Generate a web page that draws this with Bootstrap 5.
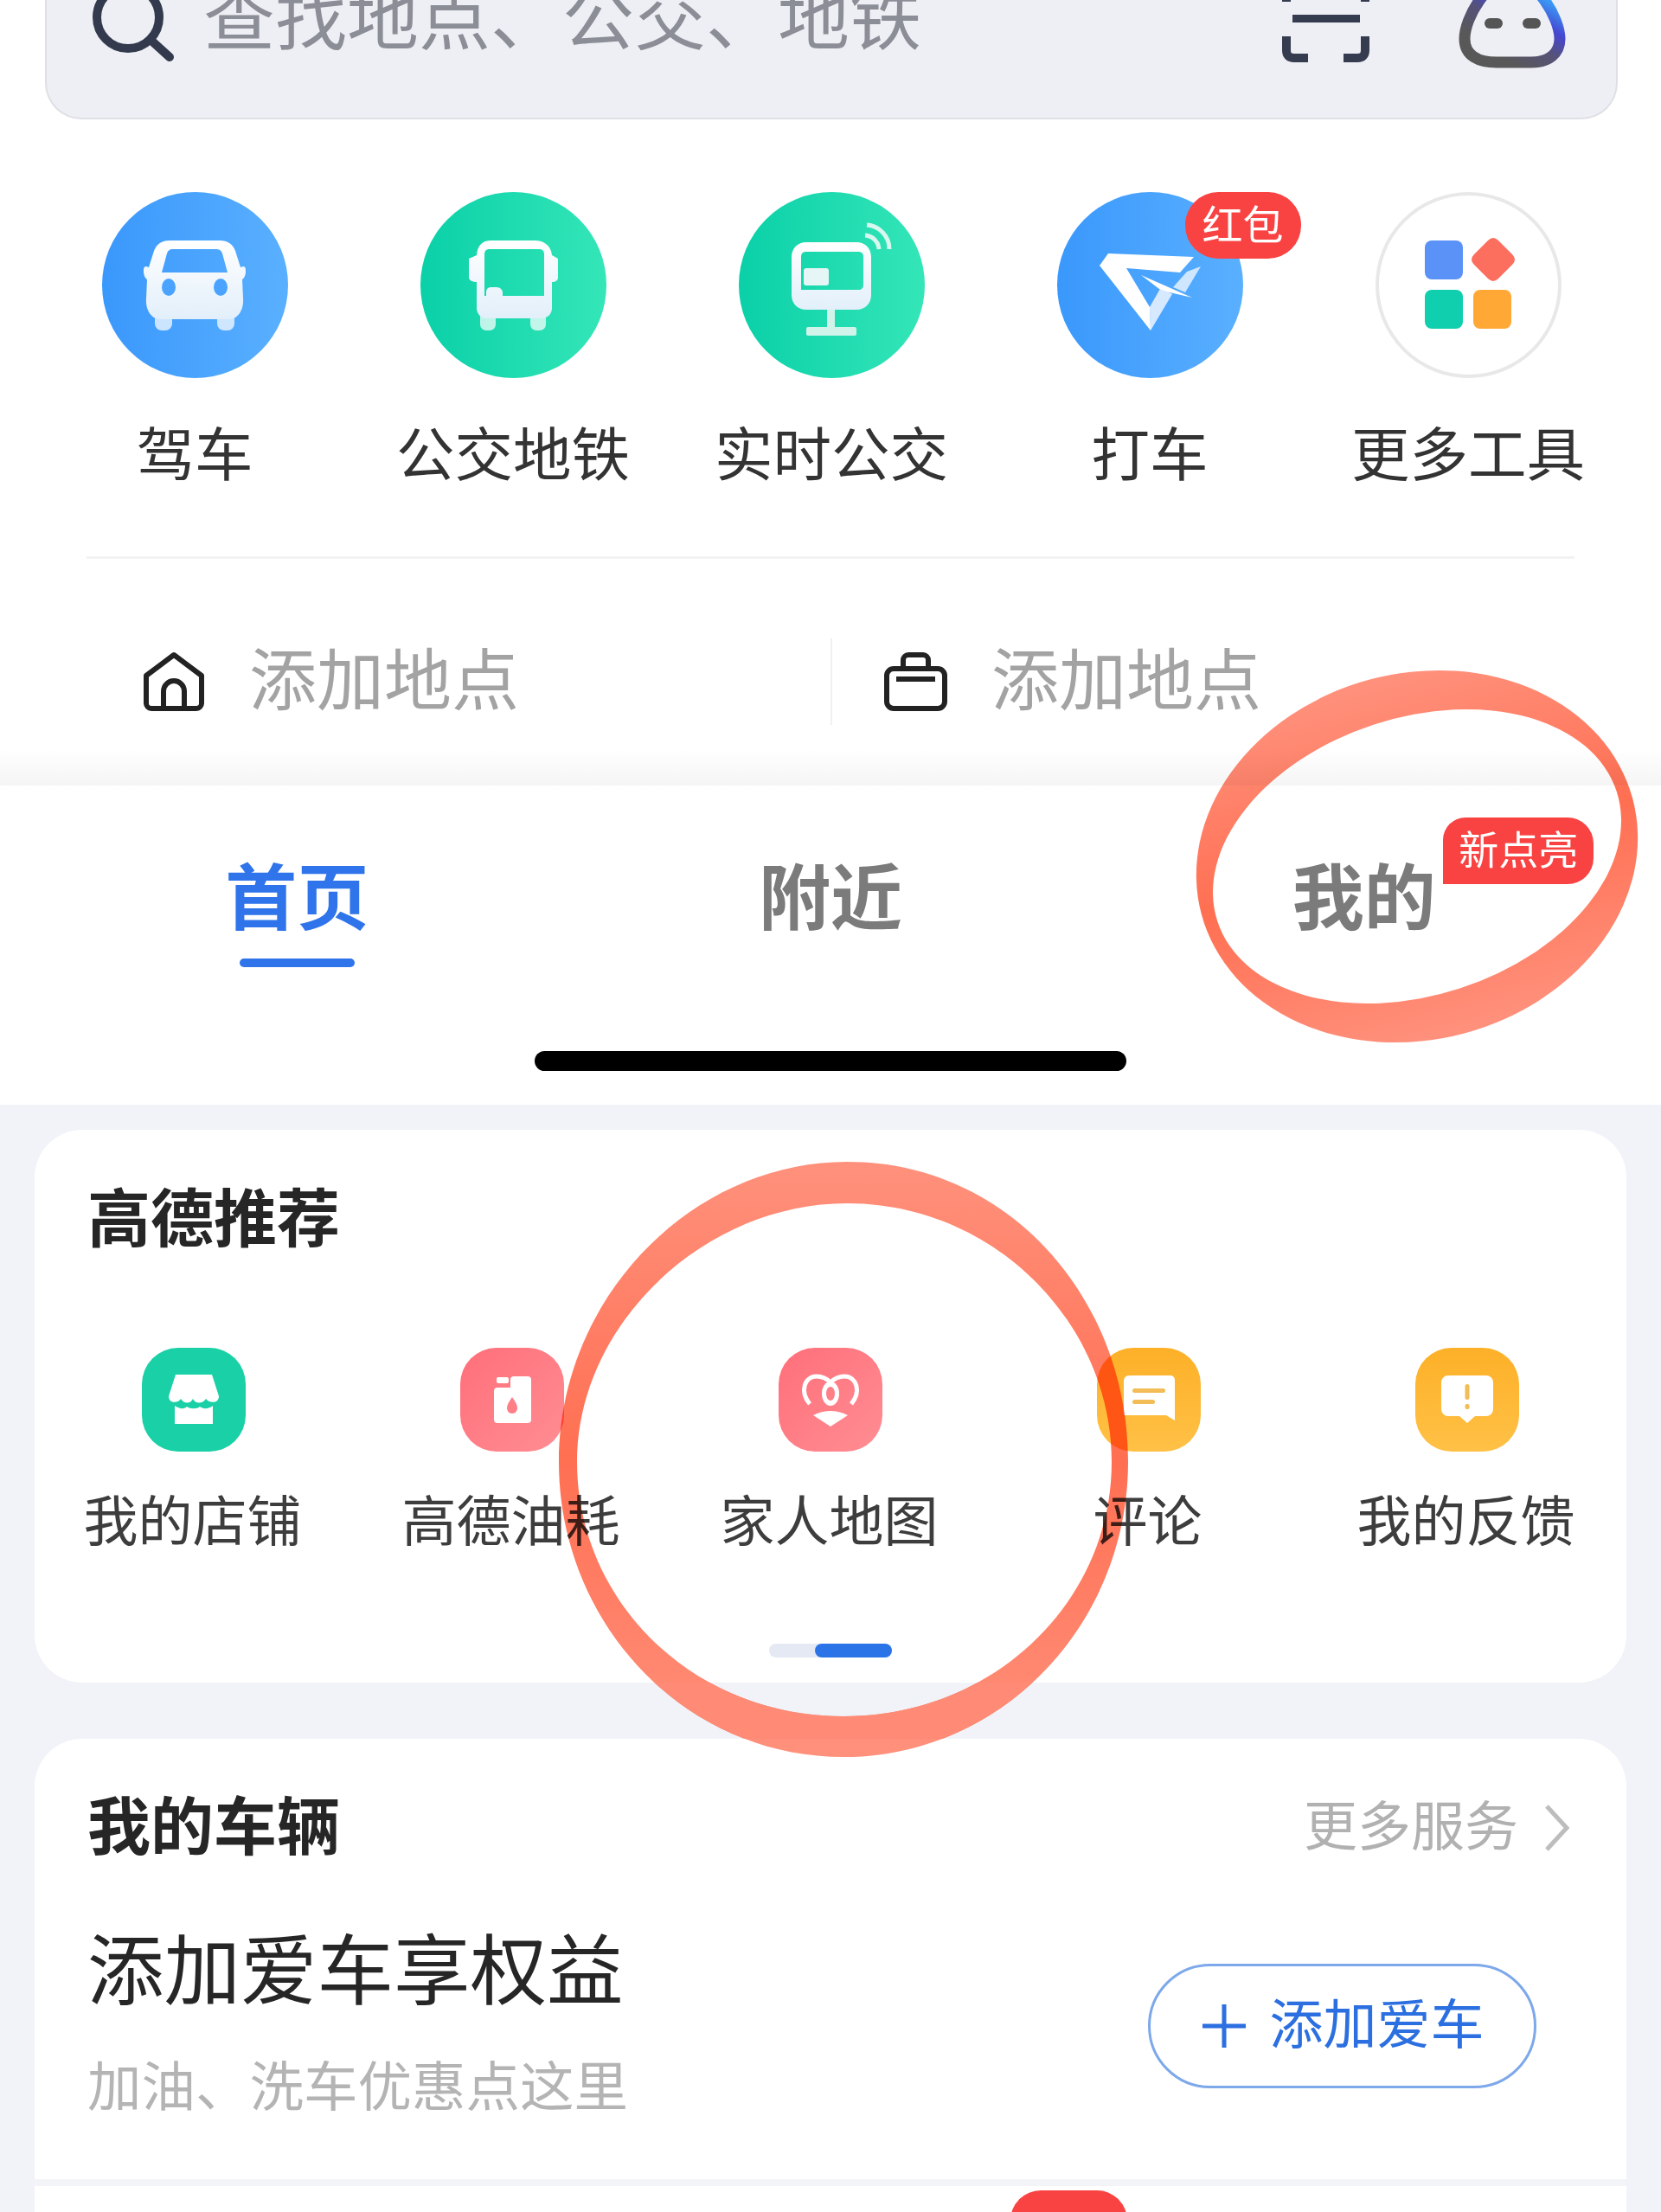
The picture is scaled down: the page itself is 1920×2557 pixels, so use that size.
<!DOCTYPE html>
<html lang="zh-CN">
<head>
    <meta charset="UTF-8">
    <title>高德地图</title>
    <link href="https://cdn.jsdelivr.net/npm/bootstrap@5.3.0/dist/css/bootstrap.min.css" rel="stylesheet">
    <style>
        html, body {
            margin: 0;
            width: 1920px;
            height: 2557px;
            overflow: hidden;
            background: #f1f3f8;
            font-family: "Liberation Sans", "Noto Sans CJK SC", sans-serif;
        }
        .page-wrap { width: 1920px; height: 2557px; overflow: hidden; }
        .map-panel { background: #fff; height: 908px; overflow: hidden; }

        /* search */
        .search-box {
            height: 138px;
            margin: 0 50px 0 52px;
            padding-left: 54px;
            background: #eeeff4;
            border: 2px solid #dfe0e6;
            border-top: 0;
            border-radius: 0 0 42px 42px;
            overflow: hidden;
        }
        .search-hint {
            font-size: 83px;
            line-height: 83px;
            margin-top: -19px;
            margin-left: 35px;
            color: #8b8e97;
            white-space: nowrap;
        }
        .search-box svg { flex: none; overflow: visible; }

        /* tools */
        .tool-grid { margin: 84px 39px 0 41px; }
        .tool-icon { width: 215px; height: 215px; display: block; margin: 0 auto; }
        .tool-name { font-size: 67.5px; line-height: 80px; margin-top: 50px; color: #333; white-space: nowrap; text-align: center; }
        .tool-slot { width: 215px; margin: 0 auto; }
        .red-tag {
            top: 0;
            left: 148px;
            width: 134px;
            height: 77px;
            border-radius: 38px;
            background: #f94343;
            color: #fff;
            font-size: 47px;
            line-height: 77px;
            text-align: center;
        }
        .hair-line { height: 3px; background: #f3f3f3; margin: 76px 100px 0; }

        /* home / company */
        .place-row { height: 100px; margin-top: 92px; }
        .place-cell { width: 50%; height: 100px; }
        .place-cell + .place-cell { border-left: 2px solid #f0f0f0; }
        .place-text { font-size: 78px; line-height: 102px; color: #a3a3a3; white-space: nowrap; margin-left: 3px; }
        .place-fade { height: 70px; background: linear-gradient(#fff 40%, #f5f5f5); }

        /* tab bar */
        .tab-bar { height: 369px; background: #fff; padding: 82px 35px 0; }
        .tab-slot { width: 33.333%; text-align: center; position: relative; }
        .tab-text { font-size: 83px; line-height: 100px; font-weight: 700; color: #7b7b7b; }
        .tab-slot.is-on .tab-text { color: #2f74ea; }
        .tab-mark { width: 133px; height: 10px; border-radius: 5px; margin: 18px auto 0; background: #2f74ea; }
        .new-tag {
            top: -45px;
            left: 400px;
            width: 174px;
            height: 77px;
            border-radius: 26px 30px 30px 0;
            background: #f94343;
            color: #fff;
            font-size: 46px;
            line-height: 77px;
        }
        .home-bar { width: 684px; height: 23px; border-radius: 12px; background: #000; margin: 97px auto 0; }

        /* cards */
        .white-panel { background: #fff; margin: 0 40px; }
        .reco-panel { height: 639px; margin-top: 29px; border-radius: 55px; }
        .panel-title { font-size: 73px; line-height: 100px; font-weight: 700; color: #262626; white-space: nowrap; }
        .reco-title { padding: 54px 0 0 61px; }
        .reco-grid { margin-top: 98px; }
        .reco-icon { width: 120px; height: 120px; display: block; margin: 0 auto; }
        .reco-name { font-size: 63px; line-height: 82px; margin-top: 40px; margin-left: -3px; color: #3d3d3d; text-align: center; white-space: nowrap; }
        .pager-track { width: 142px; height: 16px; border-radius: 8px; background: #e5e9f3; margin: 100px auto 0; }
        .pager-thumb { width: 89px; height: 16px; border-radius: 8px; background: #2b74e8; }

        .car-panel { margin-top: 65px; height: 517px; border-radius: 55px 55px 0 0; padding-top: 53px; border-bottom: 8px solid #f3f4f7; }
        .car-head { padding: 0 65px 0 61px; }
        .more-link { font-size: 62px; line-height: 100px; color: #b1b1b1; }
        .car-body { padding: 57px 104px 0 61px; }
        .car-title { font-size: 88.5px; line-height: 120px; color: #262626; white-space: nowrap; }
        .car-sub { font-size: 62.5px; line-height: 80px; margin-top: 33px; color: #b4b4b4; white-space: nowrap; }
        .add-car {
            width: 449px;
            height: 144px;
            margin-top: 50px;
            padding: 0 0 0 3px;
            border: 3px solid #7da8ea;
            border-radius: 72px;
            color: #2b6fe0;
            background: #fff;
            font-size: 62px;
            line-height: 80px;
        }
        .plus-mark { margin-right: 27px; }
        .tail-panel { height: 30px; overflow: hidden; }
        .tail-dome { width: 135px; height: 70px; margin: 5px 0 0 1128px; border-radius: 42px; background: #f94343; }

        .ring-layer { top: 0; left: 0; pointer-events: none; }
        .ring-blend { mix-blend-mode: multiply; }
    </style>
</head>
<body>
<div class="page-wrap position-relative">

    <div class="map-panel">
        <!-- search -->
        <div class="search-box d-flex align-items-start">
            <svg width="92" height="138" viewBox="106 0 92 138">
                <circle cx="146" cy="20" r="36" fill="none" stroke="#333a4d" stroke-width="10"/>
                <path d="M172 46 L194 66" stroke="#333a4d" stroke-width="10" stroke-linecap="round"/>
            </svg>
            <div class="search-hint">查找地点、公交、地铁</div>
            <svg class="ms-auto" width="101" height="138" viewBox="1482 0 101 138">
                <path d="M1494 21.5 H1572" stroke="#353c4f" stroke-width="9"/>
                <path d="M1487 42 V58 Q1487 67 1496 67 H1512 M1578 42 V58 Q1578 67 1569 67 H1553 M1487 2 V-14 M1578 2 V-14" fill="none" stroke="#353c4f" stroke-width="10"/>
            </svg>
            <svg style="margin-left:104px;margin-right:59px" width="122" height="138" viewBox="1687 0 122 138">
                <defs>
                    <linearGradient id="botLine" gradientUnits="userSpaceOnUse" x1="1745" y1="72" x2="1790" y2="0">
                        <stop offset="0" stop-color="#585858"/>
                        <stop offset="0.4" stop-color="#55527a"/>
                        <stop offset="0.68" stop-color="#4646d2"/>
                        <stop offset="1" stop-color="#3a9cf6"/>
                    </linearGradient>
                </defs>
                <path d="M1748 -25 C1720 -25 1693 20 1693 45 C1693 65 1710 72 1730 72 H1770 C1790 72 1803 62 1803 45 C1803 20 1775 -25 1748 -25Z" fill="none" stroke="url(#botLine)" stroke-width="13"/>
                <rect x="1716" y="21" width="21" height="12" rx="6" fill="#555"/>
                <rect x="1760" y="21" width="21" height="12" rx="6" fill="#555"/>
            </svg>
        </div>

        <!-- tools -->
        <div class="row row-cols-5 g-0 tool-grid">
            <div class="col">
                <svg class="tool-icon" viewBox="0 0 215 215">
                    <defs>
                        <linearGradient id="blueDisc" x1="0" y1="0" x2="1" y2="0"><stop offset="0" stop-color="#3a98fc"/><stop offset="1" stop-color="#5ab0ff"/></linearGradient>
                        <linearGradient id="greenDisc" x1="0" y1="0" x2="1" y2="0"><stop offset="0" stop-color="#0ad0a8"/><stop offset="1" stop-color="#34e6b8"/></linearGradient>
                        <linearGradient id="whiteFade" x1="0" y1="0" x2="0" y2="1"><stop offset="0" stop-color="#fff"/><stop offset="1" stop-color="#e2effa"/></linearGradient>
                    </defs>
                    <circle cx="107.5" cy="107.5" r="107.5" fill="url(#blueDisc)"/>
                    <rect x="61" y="130" width="20" height="30" rx="8" fill="#fff" opacity=".72"/>
                    <rect x="133" y="130" width="20" height="30" rx="8" fill="#fff" opacity=".72"/>
                    <path fill="url(#whiteFade)" fill-rule="evenodd" d="M78 56h58c9 0 15 4 18 12l6 19 3-1c3 0 3 3 3 6 0 4-2 8-4 9l1 22c1 13-6 24-16 24H67c-10 0-17-11-16-24l1-22c-2-1-4-5-4-9 0-3 0-6 3-6l3 1 6-19c3-8 9-12 18-12zM82 66c-4 0-6 2-7 5l-6 22h76l-6-22c-1-3-3-5-7-5z"/>
                    <ellipse cx="77" cy="110" rx="8" ry="10" fill="#4aa3ff"/>
                    <ellipse cx="137" cy="110" rx="8" ry="10" fill="#4aa3ff"/>
                </svg>
                <div class="tool-name">驾车</div>
            </div>
            <div class="col">
                <svg class="tool-icon" viewBox="0 0 215 215">
                    <circle cx="107.5" cy="107.5" r="107.5" fill="url(#greenDisc)"/>
                    <rect x="69" y="130" width="18" height="30" rx="7" fill="#fff" opacity=".72"/>
                    <rect x="127" y="130" width="18" height="30" rx="7" fill="#fff" opacity=".72"/>
                    <path fill="url(#whiteFade)" fill-rule="evenodd" d="M82 56h50c11 0 19 6 20 17l7 4v22c0 3-3 5-7 5v30c0 7-5 12-12 12H77c-7 0-12-5-12-12v-30c-4 0-9-2-9-5V77l9-4c1-11 6-17 17-17zM80 66c-4 0-6 2-6 6v48h2v-4c0-4 2-6 6-6h6c4 0 7 3 7 6v4h48V72c0-4-2-6-6-6z"/>
                </svg>
                <div class="tool-name">公交地铁</div>
            </div>
            <div class="col">
                <svg class="tool-icon" viewBox="0 0 215 215">
                    <circle cx="107.5" cy="107.5" r="107.5" fill="url(#greenDisc)"/>
                    <path fill="url(#whiteFade)" fill-rule="evenodd" d="M78 58h58c10 0 17 7 17 17v44c0 10-7 17-17 17H78c-10 0-17-7-17-17V75c0-10 7-17 17-17zM78 69c-4 0-6 2-6 6v38h66c4 0 6-2 6-6V75c0-4-2-6-6-6z"/>
                    <rect x="75" y="88" width="29" height="20" rx="3" fill="#e6f5f5"/>
                    <rect x="102" y="136" width="9" height="22" fill="#d0f4ea"/>
                    <rect x="78" y="156" width="58" height="10" rx="2" fill="#d0f4ea"/>
                    <path d="M146 50 A17 17 0 0 1 162 66 M148 38 A28 28 0 0 1 174 66" fill="none" stroke="#d8f7ee" stroke-width="5"/>
                </svg>
                <div class="tool-name">实时公交</div>
            </div>
            <div class="col">
                <div class="tool-slot position-relative">
                    <svg class="tool-icon" viewBox="0 0 215 215">
                        <circle cx="107.5" cy="107.5" r="107.5" fill="url(#blueDisc)"/>
                        <polygon points="166,86 148,116 134,110 150,92" fill="#cfe6ff"/>
                        <polygon points="107,133 120,110 133,118 108,160" fill="#d6e9ff"/>
                        <polygon points="59,71 158,75 142,93 80,88 107,133 108,160 49,85" fill="#fff"/>
                        <polygon points="97,96 156,122 130,116 118,112" fill="#fff"/>
                    </svg>
                    <div class="red-tag position-absolute">红包</div>
                </div>
                <div class="tool-name">打车</div>
            </div>
            <div class="col">
                <svg class="tool-icon" viewBox="0 0 215 215">
                    <circle cx="107.5" cy="107.5" r="105.5" fill="#fff" stroke="#e8e8e8" stroke-width="4"/>
                    <rect x="57" y="56" width="44" height="45" rx="8" fill="#5b92f8"/>
                    <path d="M130 56 Q136 50 142 56 L158 72 Q164 78 158 84 L142 100 Q136 106 130 100 L114 84 Q108 78 114 72Z" fill="#fc6e5e"/>
                    <rect x="57" y="113" width="44" height="45" rx="8" fill="#0fcfae"/>
                    <rect x="113" y="113" width="44" height="45" rx="8" fill="#ffa836"/>
                </svg>
                <div class="tool-name">更多工具</div>
            </div>
        </div>

        <div class="hair-line"></div>

        <!-- home and company -->
        <div class="place-row d-flex">
            <div class="place-cell d-flex align-items-center" style="padding-left:165px">
                <svg class="me-5" width="72" height="70" viewBox="0 0 72 70" fill="none" stroke="#222" stroke-width="6" stroke-linejoin="round">
                    <path d="M4 28 L36 4 L68 28 V60 a6 6 0 0 1 -6 6 H10 a6 6 0 0 1 -6 -6Z"/>
                    <path d="M24 66 V46 a12 12 0 0 1 24 0 V66"/>
                </svg>
                <span class="place-text">添加地点</span>
            </div>
            <div class="place-cell d-flex align-items-center" style="padding-left:60px">
                <svg class="me-5" width="73" height="70" viewBox="0 0 73 70" fill="none" stroke="#222" stroke-width="6">
                    <rect x="3" y="20" width="67" height="46" rx="8"/>
                    <path d="M22 20 V10 a6 6 0 0 1 6 -6 H45 a6 6 0 0 1 6 6 V20"/>
                    <path d="M14 32 H59"/>
                </svg>
                <span class="place-text">添加地点</span>
            </div>
        </div>
        <div class="place-fade"></div>
    </div>

    <!-- tab bar -->
    <div class="tab-bar">
        <div class="d-flex">
            <div class="tab-slot is-on">
                <div class="tab-text">首页</div>
                <div class="tab-mark"></div>
            </div>
            <div class="tab-slot">
                <div class="tab-text">附近</div>
            </div>
            <div class="tab-slot">
                <div class="tab-text">我的</div>
                <div class="new-tag position-absolute">新点亮</div>
            </div>
        </div>
        <div class="home-bar"></div>
    </div>

    <!-- recommended -->
    <div class="white-panel reco-panel">
        <div class="panel-title reco-title">高德推荐</div>
        <div class="row row-cols-5 g-0 reco-grid">
            <div class="col">
                <svg class="reco-icon" viewBox="0 0 120 120">
                    <defs>
                        <linearGradient id="pinkTile" x1="0" y1="0" x2="1" y2="1"><stop offset="0" stop-color="#ff6f7a"/><stop offset="1" stop-color="#ff8d93"/></linearGradient>
                        <linearGradient id="yellowTile" x1="0" y1="0" x2="0" y2="1"><stop offset="0" stop-color="#fdb028"/><stop offset="1" stop-color="#ffc146"/></linearGradient>
                    </defs>
                    <rect width="120" height="120" rx="42" fill="#1ad0a6"/>
                    <path d="M39 31 H81 L89 56 C89 64 79 65 74 59 C70 65 62 65 59 59 C56 65 49 65 45 59 C41 65 31 64 31 56Z" fill="#fff"/>
                    <path d="M38 67 C44 71 49 71 52 68 C56 71 64 71 67 68 C71 71 77 71 82 67 V88 H38Z" fill="#fff"/>
                </svg>
                <div class="reco-name">我的店铺</div>
            </div>
            <div class="col">
                <svg class="reco-icon" viewBox="0 0 120 120">
                    <rect width="120" height="120" rx="42" fill="url(#pinkTile)"/>
                    <rect x="42" y="34" width="14" height="7" rx="2" fill="#fff"/>
                    <path d="M62 33 H78 a4 4 0 0 1 4 4 V83 a4 4 0 0 1 -4 4 H43 a4 4 0 0 1 -4 -4 V50 a4 4 0 0 1 4 -4 H58 V37 a4 4 0 0 1 4 -4Z" fill="#fff"/>
                    <path d="M60 57 C64 63 66 66 66 70 a6 6 0 0 1 -12 0 C54 66 56 63 60 57Z" fill="#ff7f87"/>
                </svg>
                <div class="reco-name">高德油耗</div>
            </div>
            <div class="col">
                <svg class="reco-icon" viewBox="0 0 120 120">
                    <rect width="120" height="120" rx="42" fill="url(#pinkTile)"/>
                    <path d="M36 65 C24 50 30 33 44 33 C51 33 56 36 60 40 C64 36 69 33 76 33 C90 33 96 50 84 65" fill="none" stroke="#fff" stroke-width="5"/>
                    <ellipse cx="60" cy="53" rx="10" ry="14" fill="#fff"/>
                    <ellipse cx="60" cy="53" rx="5" ry="8" fill="#ff7f87"/>
                    <path d="M40 78 Q60 68 80 78 L60 91Z" fill="#fff"/>
                </svg>
                <div class="reco-name">家人地图</div>
            </div>
            <div class="col">
                <svg class="reco-icon" viewBox="0 0 120 120">
                    <rect width="120" height="120" rx="42" fill="url(#yellowTile)"/>
                    <path d="M37 32 H85 a5 5 0 0 1 5 5 V84 L80 78 H31 V38 a6 6 0 0 1 6 -6Z" fill="#fff"/>
                    <rect x="41" y="47" width="38" height="5" rx="2.5" fill="#f2bc57"/>
                    <rect x="41" y="60" width="26" height="5" rx="2.5" fill="#f2bc57"/>
                </svg>
                <div class="reco-name">评论</div>
            </div>
            <div class="col">
                <svg class="reco-icon" viewBox="0 0 120 120">
                    <rect width="120" height="120" rx="42" fill="url(#yellowTile)"/>
                    <path d="M38 32 H82 a8 8 0 0 1 8 8 V71 a8 8 0 0 1 -8 8 H69 L60 87 L51 79 H38 a8 8 0 0 1 -8 -8 V40 a8 8 0 0 1 8 -8Z" fill="#fff"/>
                    <rect x="57.5" y="42" width="5" height="18" rx="2.5" fill="#f2bc57"/>
                    <rect x="57.5" y="65" width="5" height="6" rx="2" fill="#f2bc57"/>
                </svg>
                <div class="reco-name">我的反馈</div>
            </div>
        </div>
        <div class="pager-track d-flex justify-content-end"><div class="pager-thumb"></div></div>
    </div>

    <!-- my car -->
    <div class="white-panel car-panel">
        <div class="car-head d-flex justify-content-between align-items-center">
            <div class="panel-title">我的车辆</div>
            <div class="d-flex align-items-center">
                <span class="more-link">更多服务</span>
                <svg style="margin-left:30px" width="30" height="56" viewBox="0 0 30 56"><path d="M3 3 L26 28 L3 53" fill="none" stroke="#bdbdbd" stroke-width="5"/></svg>
            </div>
        </div>
        <div class="car-body d-flex justify-content-between align-items-start">
            <div>
                <div class="car-title">添加爱车享权益</div>
                <div class="car-sub">加油、洗车优惠点这里</div>
            </div>
            <button type="button" class="btn add-car d-flex align-items-center justify-content-center">
                <svg class="plus-mark" width="50" height="50" viewBox="0 0 50 50"><path d="M0 25 H50 M25 0 V50" stroke="#2b6fe0" stroke-width="5"/></svg>
                添加爱车
            </button>
        </div>
    </div>
    <div class="white-panel tail-panel">
        <div class="tail-dome"></div>
    </div>

    <!-- hand drawn rings -->
    <svg class="ring-layer ring-blend position-absolute" width="1920" height="2557" viewBox="0 0 1920 2557">
        <defs>
            <linearGradient id="ringTint" x1="0" y1="0" x2="0" y2="1">
                <stop offset="0" stop-color="#ff917c"/>
                <stop offset="0.5" stop-color="#ff6f52"/>
                <stop offset="1" stop-color="#ff917c"/>
            </linearGradient>
            <mask id="ringOneCut" maskUnits="userSpaceOnUse" x="1300" y="700" width="620" height="600">
                <rect x="1300" y="700" width="620" height="600" fill="#fff"/>
                <ellipse cx="1638" cy="990" rx="242.6" ry="160.4" transform="rotate(-18 1638 990)" fill="#000"/>
            </mask>
        </defs>
        <g mask="url(#ringOneCut)">
            <ellipse cx="1638" cy="990" rx="258" ry="211.6" transform="rotate(-15 1638 990)" fill="url(#ringTint)"/>
        </g>
        <path fill="url(#ringTint)" fill-rule="evenodd" d="M979 1343 C1165 1343 1304 1500 1304 1690 C1304 1875 1160 2031 975 2031 C790 2031 646 1875 646 1690 C646 1500 800 1343 979 1343Z M979 1391 C1150 1391 1285 1530 1285 1690 C1285 1850 1150 1984 975 1984 C800 1984 667 1850 667 1690 C667 1530 815 1391 979 1391Z"/>
    </svg>
    <!-- same ring, plain paint where it crosses the grey gap -->
    <svg class="ring-layer position-absolute" width="1920" height="2557" viewBox="0 0 1920 2557">
        <defs><clipPath id="greyGap"><rect x="0" y="1945" width="1920" height="65"/></clipPath></defs>
        <path clip-path="url(#greyGap)" fill="#ff8a75" fill-rule="evenodd" d="M979 1343 C1165 1343 1304 1500 1304 1690 C1304 1875 1160 2031 975 2031 C790 2031 646 1875 646 1690 C646 1500 800 1343 979 1343Z M979 1391 C1150 1391 1285 1530 1285 1690 C1285 1850 1150 1984 975 1984 C800 1984 667 1850 667 1690 C667 1530 815 1391 979 1391Z"/>
    </svg>
</div>

<script src="https://cdn.jsdelivr.net/npm/bootstrap@5.3.0/dist/js/bootstrap.bundle.min.js"></script>
</body>
</html>
